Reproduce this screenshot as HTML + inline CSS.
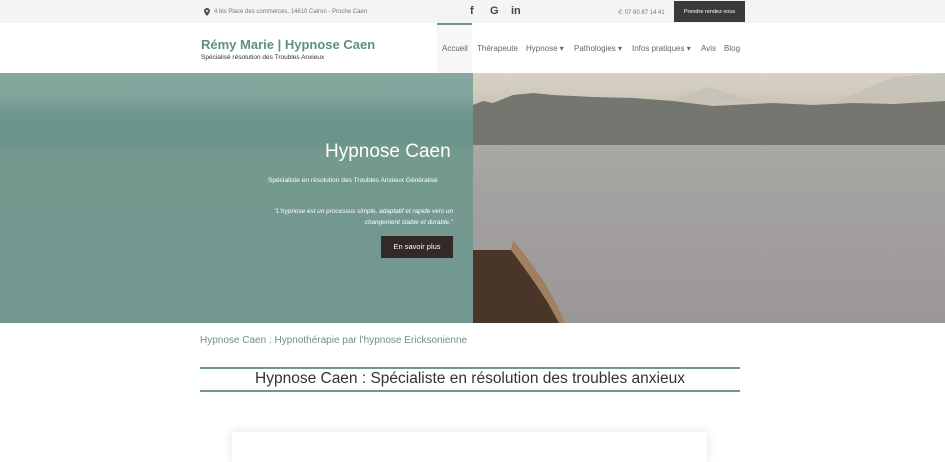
<!DOCTYPE html>
<html><head><meta charset="utf-8"><style>
*{margin:0;padding:0;box-sizing:border-box}
body{width:945px;height:448px;overflow:hidden;background:#fff;font-family:"Liberation Sans",sans-serif;position:relative}
.top{position:absolute;left:0;top:0;width:945px;height:23px;background:#f4f4f4}
.t{position:absolute;font-size:6px;color:#777}
.nav{position:absolute;top:44px;font-size:8px;color:#666}
.hero{position:absolute;left:0;top:73px;width:945px;height:250px;overflow:hidden}
</style></head><body>
<div class="top"></div>
<svg style="position:absolute;left:204px;top:8px" width="6" height="8" viewBox="0 0 6 8"><path d="M3 0C1.3 0 0 1.3 0 3c0 2 3 5 3 5s3-3 3-5C6 1.3 4.7 0 3 0z" fill="#555"/><circle cx="3" cy="3" r="1" fill="#f4f4f4"/></svg>
<div class="t" style="left:214px;top:9px">4 bis Place des commerces, 14610 Cairon - Proche Caen</div>
<div style="position:absolute;left:470px;top:5px;font-size:11px;font-weight:bold;color:#444">f</div>
<div style="position:absolute;left:490px;top:5px;font-size:11px;font-weight:bold;color:#444">G</div>
<div style="position:absolute;left:511px;top:5px;font-size:11px;font-weight:bold;color:#444">in</div>
<div class="t" style="left:618px;top:9px">✆ 07 60 87 14 41</div>
<div style="position:absolute;left:674px;top:1px;width:71px;height:21px;background:#3a3a3a;color:#fff;font-size:5.5px;line-height:22px;text-align:center">Prendre rendez-vous</div>
<div style="position:absolute;left:437px;top:23px;width:35px;height:2px;background:#6d9990"></div>
<div style="position:absolute;left:437px;top:25px;width:35px;height:48px;background:#f7f7f7"></div>
<div style="position:absolute;left:201px;top:37px;font-size:13px;font-weight:bold;color:#5e8f86">Rémy Marie | Hypnose Caen</div>
<div style="position:absolute;left:201px;top:54px;font-size:6.5px;color:#333">Spécialisé résolution des Troubles Anxieux</div>
<div class="nav" style="left:442px">Accueil</div>
<div class="nav" style="left:477px">Thérapeute</div>
<div class="nav" style="left:526px">Hypnose ▾</div>
<div class="nav" style="left:574px">Pathologies ▾</div>
<div class="nav" style="left:632px">Infos pratiques ▾</div>
<div class="nav" style="left:701px">Avis</div>
<div class="nav" style="left:724px">Blog</div>
<div class="hero">
<div style="position:absolute;left:0;top:0;width:945px;height:250px;background:linear-gradient(#d8d2c2 0,#d0cbbd 20px,#a9a8a4 74px,#a4a2a0 120px,#9a9796 250px)"></div>
<svg style="position:absolute;left:473px;top:0" width="472" height="250"><path d="M190 30L235 14 280 28z M360 30L420 4 472 0V30z" fill="#c4c0b8" opacity=".8"/><path d="M0 32L10 28 20 30 40 22 60 20 80 22 120 24 160 25 200 28 240 33 300 30 340 32 380 30 420 31 472 28V72H0z" fill="#75766f"/><path d="M0 250V177H40L58 198 70 215 82 240 88 250z" fill="#4a3628"/><path d="M40 167L58 190 72 210 84 232 92 250 86 250 75 230 64 213 52 196 38 177z" fill="#a08060"/></svg>
<div style="position:absolute;left:0;top:0;width:473px;height:250px;background:linear-gradient(#86a89f 0,#80a39a 25px,#6f968d 40px,#6c948b 70px,#75998f 80px,#729890 250px)"></div>
<div style="position:absolute;left:325px;top:68px;font-size:19px;color:#fff">Hypnose Caen</div>
<div style="position:absolute;left:268px;top:104px;font-size:6.6px;color:#fff">Spécialiste en résolution des Troubles Anxieux Généralisé</div>
<div style="position:absolute;left:230px;top:133px;width:223px;text-align:right;font-size:6.4px;font-style:italic;color:#fff;line-height:11px">"L'hypnose est un processus simple, adaptatif et rapide vers un<br>changement stable et durable."</div>
<div style="position:absolute;left:381px;top:163px;width:72px;height:22px;background:#332a28;color:#fff;font-size:7.5px;line-height:22px;text-align:center">En savoir plus</div>
</div>
<div style="position:absolute;left:200px;top:335px;font-size:10px;color:#6e8f88">Hypnose Caen : Hypnothérapie par l'hypnose Ericksonienne</div>
<div style="position:absolute;left:200px;top:367px;width:540px;height:2px;background:#6d9990"></div>
<div style="position:absolute;left:200px;top:370px;width:540px;text-align:center;font-size:15.5px;color:#333">Hypnose Caen : Spécialiste en résolution des troubles anxieux</div>
<div style="position:absolute;left:200px;top:390px;width:540px;height:2px;background:#6d9990"></div>
<div style="position:absolute;left:232px;top:432px;width:475px;height:30px;background:#fff;box-shadow:0 0 10px rgba(0,0,0,.12)"></div>
</body></html>
